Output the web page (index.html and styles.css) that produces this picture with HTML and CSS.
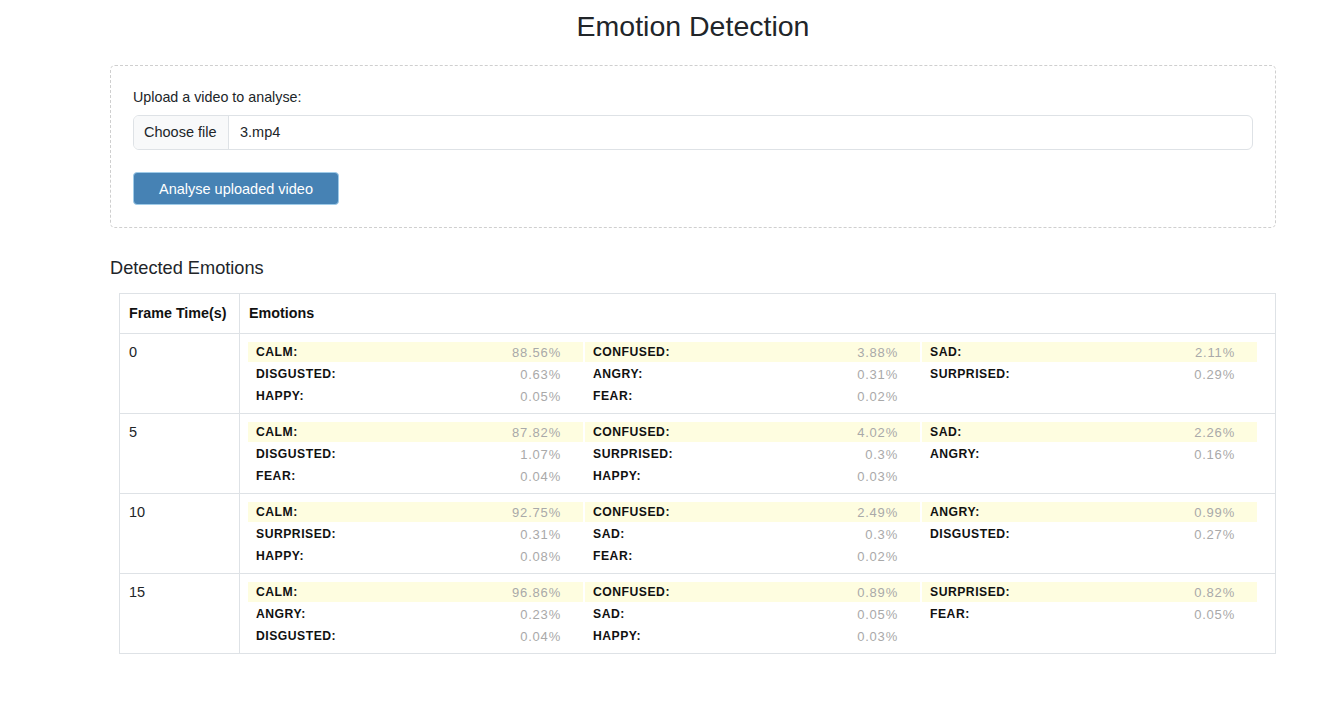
FILE: index.html
```html
<!DOCTYPE html>
<html lang="en">
<head>
<meta charset="utf-8">
<title>Emotion Detection</title>
<link rel="stylesheet" href="styles.css">
</head>
<body>
<div class="container">
  <h1 class="title">Emotion Detection</h1>
  <div class="upload-box">
    <label class="upload-label">Upload a video to analyse:</label>
    <div class="file-input">
      <span class="file-btn">Choose file</span>
      <span class="file-name">3.mp4</span>
    </div>
    <button class="analyse-btn">Analyse uploaded video</button>
  </div>

  <h2 class="section-title">Detected Emotions</h2>
  <table class="emo-table">
    <thead>
      <tr><th class="col-time">Frame Time(s)</th><th>Emotions</th></tr>
    </thead>
    <tbody>
      <tr>
        <td class="col-time">0</td>
        <td class="emo-cell"><div class="emo-grid">
          <div class="emo hl"><span class="name">CALM:</span><span class="val">88.56%</span></div>
          <div class="emo hl"><span class="name">CONFUSED:</span><span class="val">3.88%</span></div>
          <div class="emo hl"><span class="name">SAD:</span><span class="val">2.11%</span></div>
          <div class="emo"><span class="name">DISGUSTED:</span><span class="val">0.63%</span></div>
          <div class="emo"><span class="name">ANGRY:</span><span class="val">0.31%</span></div>
          <div class="emo"><span class="name">SURPRISED:</span><span class="val">0.29%</span></div>
          <div class="emo"><span class="name">HAPPY:</span><span class="val">0.05%</span></div>
          <div class="emo"><span class="name">FEAR:</span><span class="val">0.02%</span></div>
        </div></td>
      </tr>
      <tr>
        <td class="col-time">5</td>
        <td class="emo-cell"><div class="emo-grid">
          <div class="emo hl"><span class="name">CALM:</span><span class="val">87.82%</span></div>
          <div class="emo hl"><span class="name">CONFUSED:</span><span class="val">4.02%</span></div>
          <div class="emo hl"><span class="name">SAD:</span><span class="val">2.26%</span></div>
          <div class="emo"><span class="name">DISGUSTED:</span><span class="val">1.07%</span></div>
          <div class="emo"><span class="name">SURPRISED:</span><span class="val">0.3%</span></div>
          <div class="emo"><span class="name">ANGRY:</span><span class="val">0.16%</span></div>
          <div class="emo"><span class="name">FEAR:</span><span class="val">0.04%</span></div>
          <div class="emo"><span class="name">HAPPY:</span><span class="val">0.03%</span></div>
        </div></td>
      </tr>
      <tr>
        <td class="col-time">10</td>
        <td class="emo-cell"><div class="emo-grid">
          <div class="emo hl"><span class="name">CALM:</span><span class="val">92.75%</span></div>
          <div class="emo hl"><span class="name">CONFUSED:</span><span class="val">2.49%</span></div>
          <div class="emo hl"><span class="name">ANGRY:</span><span class="val">0.99%</span></div>
          <div class="emo"><span class="name">SURPRISED:</span><span class="val">0.31%</span></div>
          <div class="emo"><span class="name">SAD:</span><span class="val">0.3%</span></div>
          <div class="emo"><span class="name">DISGUSTED:</span><span class="val">0.27%</span></div>
          <div class="emo"><span class="name">HAPPY:</span><span class="val">0.08%</span></div>
          <div class="emo"><span class="name">FEAR:</span><span class="val">0.02%</span></div>
        </div></td>
      </tr>
      <tr>
        <td class="col-time">15</td>
        <td class="emo-cell"><div class="emo-grid">
          <div class="emo hl"><span class="name">CALM:</span><span class="val">96.86%</span></div>
          <div class="emo hl"><span class="name">CONFUSED:</span><span class="val">0.89%</span></div>
          <div class="emo hl"><span class="name">SURPRISED:</span><span class="val">0.82%</span></div>
          <div class="emo"><span class="name">ANGRY:</span><span class="val">0.23%</span></div>
          <div class="emo"><span class="name">SAD:</span><span class="val">0.05%</span></div>
          <div class="emo"><span class="name">FEAR:</span><span class="val">0.05%</span></div>
          <div class="emo"><span class="name">DISGUSTED:</span><span class="val">0.04%</span></div>
          <div class="emo"><span class="name">HAPPY:</span><span class="val">0.03%</span></div>
        </div></td>
      </tr>
    </tbody>
  </table>
</div>
</body>
</html>
```

FILE: styles.css
```css
* { box-sizing: border-box; }

body {
  margin: 0;
  background: #fff;
  color: #212529;
  font-family: "Liberation Sans", Arial, sans-serif;
  font-size: 14.5px;
  line-height: 21px;
}

.container {
  width: 1166px;
  margin-left: 110px;
}

.title {
  margin: 9px 0 22px;
  font-size: 28.5px;
  line-height: 34px;
  font-weight: 400;
  text-align: center;
  color: #212529;
}

.upload-box {
  border: 1px dashed #cfcfcf;
  border-radius: 5px;
  padding: 21px 22px 22px;
  display: flex;
  flex-direction: column;
  align-items: flex-start;
}

.upload-label {
  display: block;
  font-size: 14.3px;
  margin-bottom: 7px;
}

.file-input {
  display: flex;
  width: 100%;
  height: 35px;
  border: 1px solid #dee2e6;
  border-radius: 6px;
  overflow: hidden;
  margin-bottom: 22px;
}

.file-btn {
  display: flex;
  align-items: center;
  width: 95px;
  padding-left: 10px;
  background: #f8f9fa;
  border-right: 1px solid #dee2e6;
  font-size: 14.5px;
}

.file-name {
  display: flex;
  align-items: center;
  padding-left: 11px;
  font-size: 14.5px;
}

.analyse-btn {
  width: 206px;
  height: 33px;
  background: #4682b4;
  color: #fff;
  border: 1px solid #9fcbe8;
  border-radius: 4px;
  font-family: inherit;
  font-size: 14.5px;
  padding: 0;
}

.section-title {
  margin: 29px 0 14px;
  font-size: 18.2px;
  line-height: 22px;
  font-weight: 400;
}

.emo-table {
  margin-left: 9px;
  width: 1157px;
  border-collapse: collapse;
}

.emo-table th,
.emo-table td {
  border: 1px solid #dee2e6;
  text-align: left;
  vertical-align: top;
}

.emo-table th {
  padding: 9px 9px 9px;
  font-weight: 700;
  font-size: 14.3px;
  color: #111;
}

.emo-table td {
  padding: 8px 9px 8px;
  font-size: 14.5px;
}

.emo-table .col-time {
  width: 120px;
}

.emo-table td.emo-cell {
  padding: 8px 8px 7px;
}

.emo-grid {
  display: grid;
  grid-template-columns: repeat(3, 335px);
  column-gap: 2px;
  row-gap: 2px;
}

.emo {
  display: flex;
  justify-content: space-between;
  align-items: center;
  height: 20px;
  padding: 0 22px 0 8px;
}

.emo.hl {
  background: #fefde0;
}

.emo .name {
  font-size: 12.2px;
  font-weight: 700;
  letter-spacing: 0.5px;
  color: #111;
}

.emo .val {
  font-size: 13px;
  letter-spacing: 0.8px;
  color: #a9a9a9;
}
```
